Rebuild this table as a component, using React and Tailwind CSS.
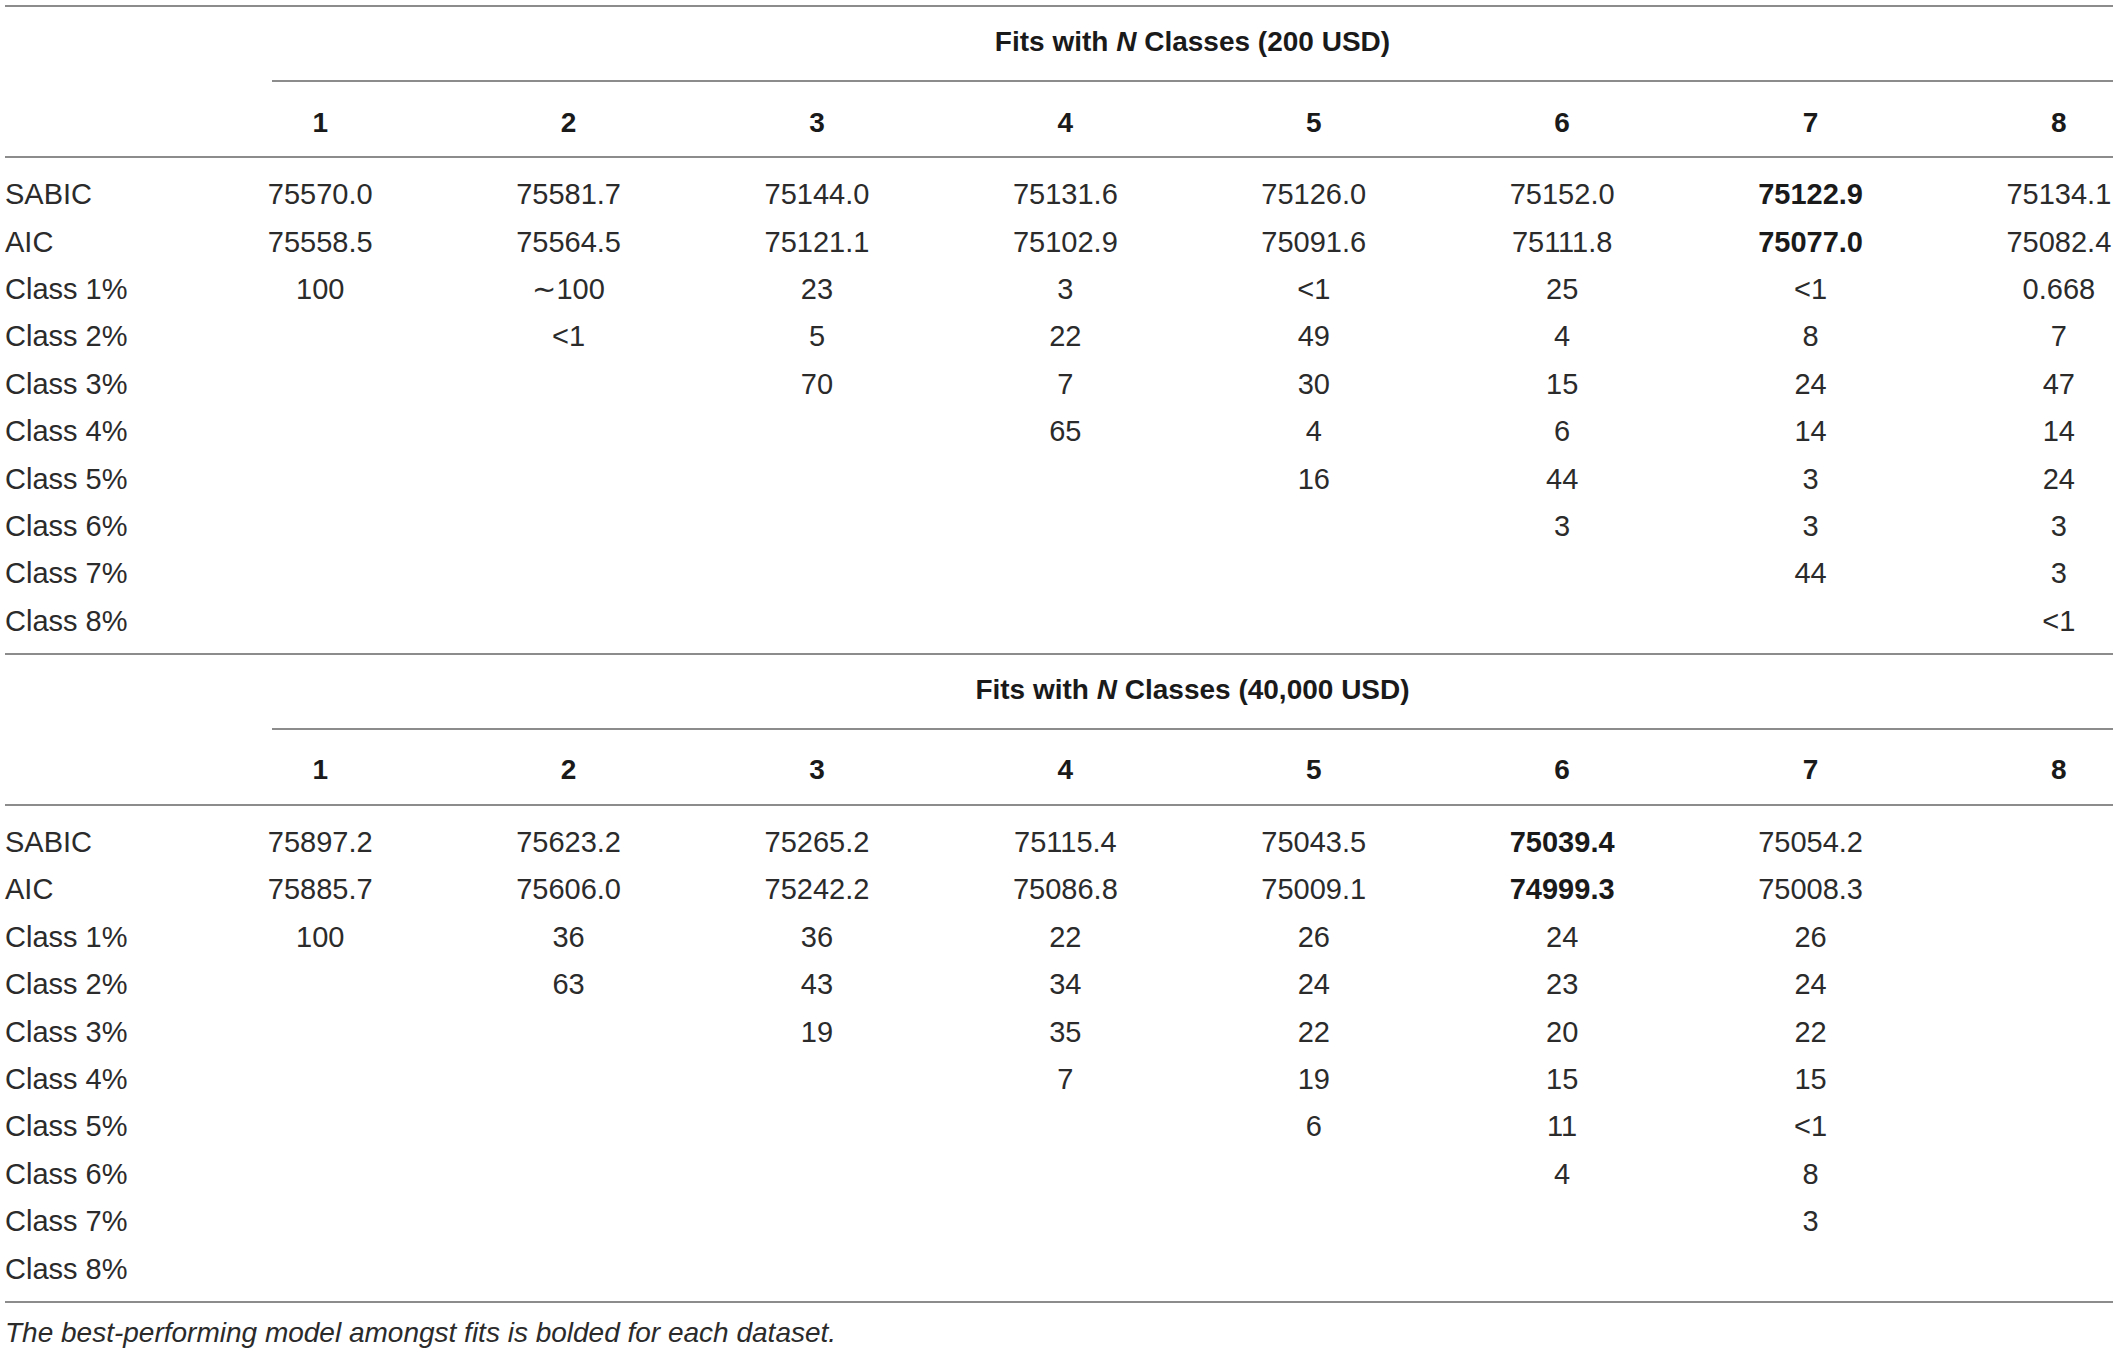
import React from "react";

const blocks = [
  {
    title: "200 USD",
    rows: [
      ["SABIC", ["75570.0", "75581.7", "75144.0", "75131.6", "75126.0", "75152.0", "*75122.9", "75134.1"]],
      ["AIC", ["75558.5", "75564.5", "75121.1", "75102.9", "75091.6", "75111.8", "*75077.0", "75082.4"]],
      ["Class 1%", ["100", "\u223C100", "23", "3", "<1", "25", "<1", "0.668"]],
      ["Class 2%", ["", "<1", "5", "22", "49", "4", "8", "7"]],
      ["Class 3%", ["", "", "70", "7", "30", "15", "24", "47"]],
      ["Class 4%", ["", "", "", "65", "4", "6", "14", "14"]],
      ["Class 5%", ["", "", "", "", "16", "44", "3", "24"]],
      ["Class 6%", ["", "", "", "", "", "3", "3", "3"]],
      ["Class 7%", ["", "", "", "", "", "", "44", "3"]],
      ["Class 8%", ["", "", "", "", "", "", "", "<1"]],
    ],
  },
  {
    title: "40,000 USD",
    rows: [
      ["SABIC", ["75897.2", "75623.2", "75265.2", "75115.4", "75043.5", "*75039.4", "75054.2", ""]],
      ["AIC", ["75885.7", "75606.0", "75242.2", "75086.8", "75009.1", "*74999.3", "75008.3", ""]],
      ["Class 1%", ["100", "36", "36", "22", "26", "24", "26", ""]],
      ["Class 2%", ["", "63", "43", "34", "24", "23", "24", ""]],
      ["Class 3%", ["", "", "19", "35", "22", "20", "22", ""]],
      ["Class 4%", ["", "", "", "7", "19", "15", "15", ""]],
      ["Class 5%", ["", "", "", "", "6", "11", "<1", ""]],
      ["Class 6%", ["", "", "", "", "", "4", "8", ""]],
      ["Class 7%", ["", "", "", "", "", "", "3", ""]],
      ["Class 8%", ["", "", "", "", "", "", "", ""]],
    ],
  },
];

const gridCols = "grid grid-cols-[191px_repeat(7,248.4px)_1fr] items-center";

const Cell = ({ value, last }) => {
  const bold = value.startsWith("*");
  const text = bold ? value.slice(1) : value;
  return (
    <div className={`text-center whitespace-nowrap ${last ? "pl-[70px]" : ""} ${bold ? "font-bold text-[#1a1a1a]" : ""}`}>
      {text}
    </div>
  );
};

const Block = ({ block, isLast }) => (
  <div className="border-t-2 border-[#8c8c8c]">
    <div className="ml-[267px] h-[75px] border-b-2 border-[#8c8c8c] flex items-center justify-center pb-[3px] text-[28px] font-bold text-[#1a1a1a]">
      Fits with&nbsp;<span className="italic">N</span>&nbsp;Classes ({block.title})
    </div>
    <div className={`${gridCols} h-[76px] pt-[7px] border-b-2 border-[#8c8c8c] text-[28px] font-bold text-[#1a1a1a]`}>
      <div />
      {[1, 2, 3, 4, 5, 6, 7, 8].map((n) => (
        <Cell key={n} value={String(n)} last={n === 8} />
      ))}
    </div>
    <div className={`pt-[13px] pb-[8px] ${isLast ? "border-b-2 border-[#8c8c8c]" : ""}`}>
      {block.rows.map(([label, vals]) => (
        <div key={label} className={`${gridCols} h-[47.4px]`}>
          <div className="whitespace-nowrap">{label}</div>
          {vals.map((v, i) => (
            <Cell key={i} value={v} last={i === 7} />
          ))}
        </div>
      ))}
    </div>
  </div>
);

export default function App() {
  return (
    <div className="w-[2118px] min-h-[1354px] bg-white px-[5px] pt-[5px] font-['Liberation_Sans',Arial,sans-serif] text-[29px] text-[#2b2b2b] leading-none">
      {blocks.map((b, i) => (
        <Block key={b.title} block={b} isLast={i === blocks.length - 1} />
      ))}
      <p className="pt-[16px] text-[28px] italic text-[#2b2b2b]">
        The best-performing model amongst fits is bolded for each dataset.
      </p>
    </div>
  );
}
